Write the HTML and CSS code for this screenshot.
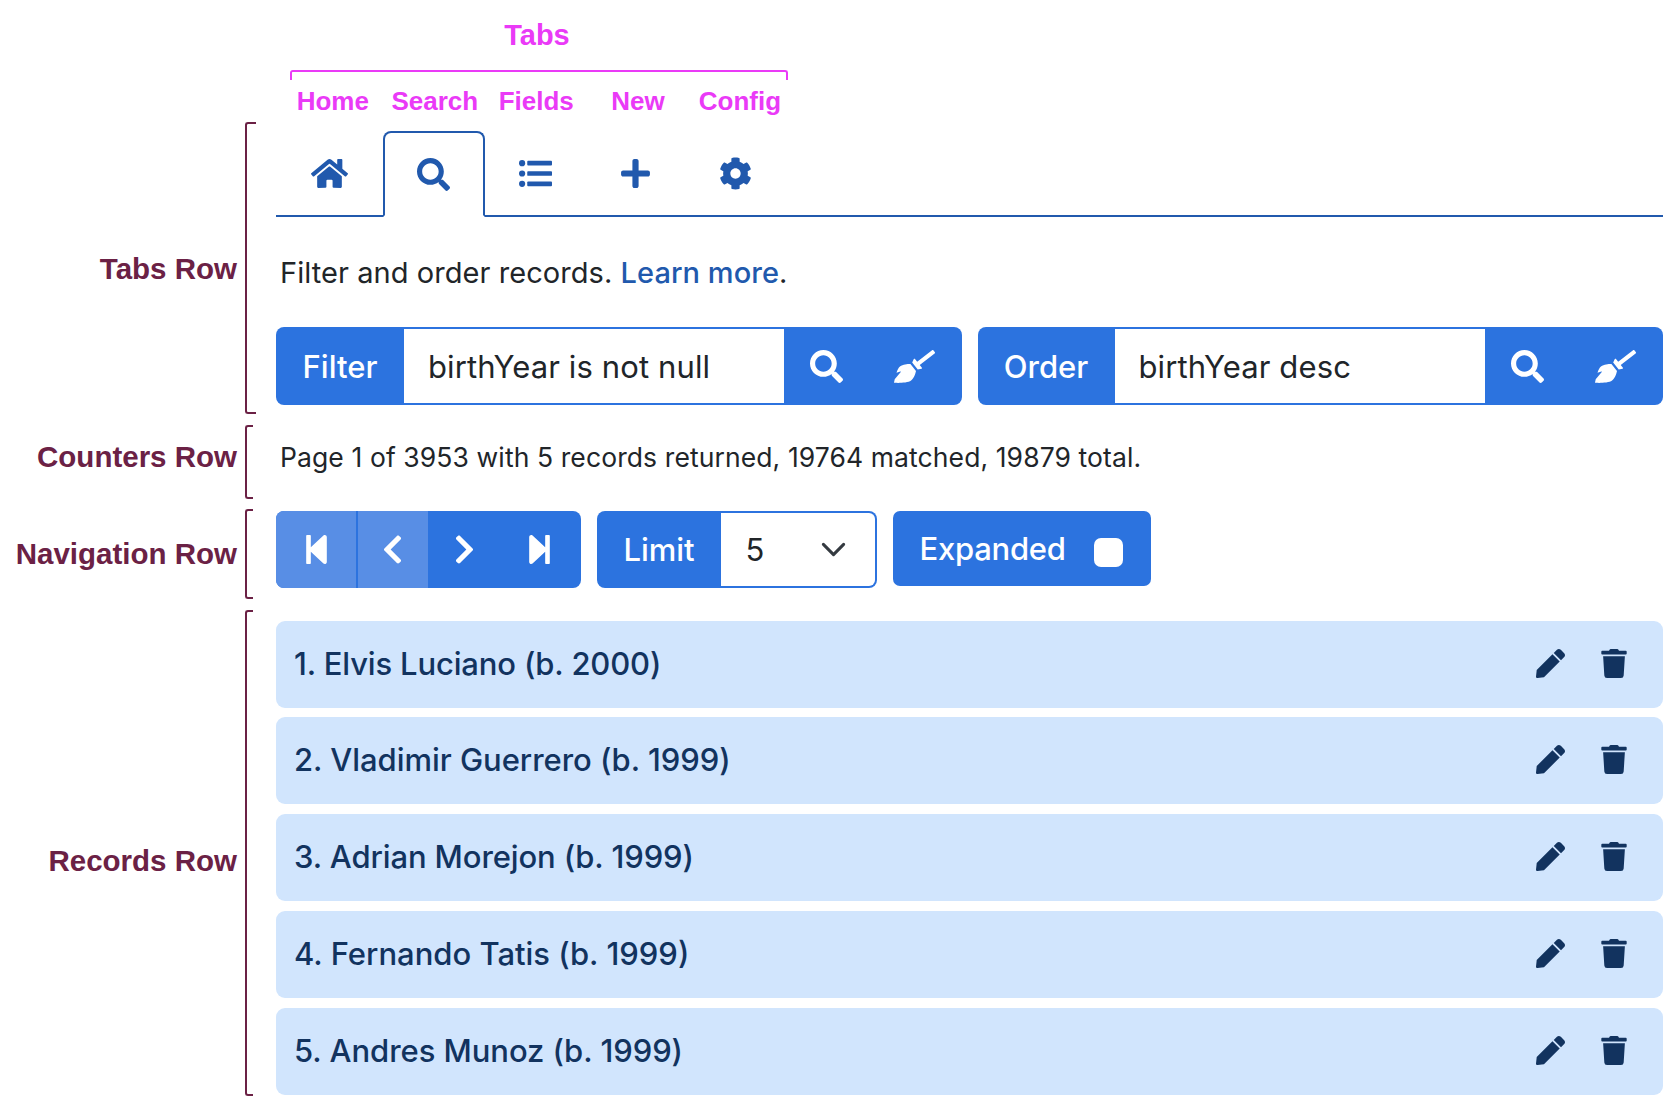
FILE: index.html
```html
<!DOCTYPE html>
<html lang="en">
<head>
<meta charset="utf-8">
<title>Records</title>
<link rel="stylesheet" href="styles.css">
</head>
<body>
<svg class="sprite" xmlns="http://www.w3.org/2000/svg">
  <symbol id="home" viewBox="0 0 576 512"><path d="M280.37 148.26L96 300.11V464a16 16 0 0 0 16 16l112.06-.29a16 16 0 0 0 15.92-16V368a16 16 0 0 1 16-16h64a16 16 0 0 1 16 16v95.64a16 16 0 0 0 16 16.05L464 480a16 16 0 0 0 16-16V300L295.67 148.26a12.19 12.19 0 0 0-15.3 0zM571.6 251.47L488 182.56V44.05a12 12 0 0 0-12-12h-56a12 12 0 0 0-12 12v72.61L318.47 43a48 48 0 0 0-61 0L4.34 251.47a12 12 0 0 0-1.6 16.9l25.5 31A12 12 0 0 0 45.15 301l235.22-193.74a12.19 12.19 0 0 1 15.3 0L530.9 301a12 12 0 0 0 16.9-1.6l25.5-31a12 12 0 0 0-1.7-16.93z"/></symbol>
  <symbol id="search" viewBox="0 0 512 512"><path d="M505 442.7L405.3 343c-4.5-4.5-10.6-7-17-7H372c27.6-35.3 44-79.7 44-128C416 93.1 322.9 0 208 0S0 93.1 0 208s93.1 208 208 208c48.3 0 92.7-16.4 128-44v16.3c0 6.4 2.5 12.5 7 17l99.7 99.7c9.4 9.4 24.6 9.4 33.9 0l28.3-28.3c9.4-9.4 9.4-24.6.1-34zM208 336c-70.7 0-128-57.2-128-128 0-70.7 57.2-128 128-128 70.7 0 128 57.2 128 128 0 70.7-57.2 128-128 128z"/></symbol>
  <symbol id="list" viewBox="0 0 512 512"><circle cx="48" cy="96" r="48"/><circle cx="48" cy="256" r="48"/><circle cx="48" cy="416" r="48"/><rect x="128" y="60" width="384" height="72" rx="14"/><rect x="128" y="220" width="384" height="72" rx="14"/><rect x="128" y="380" width="384" height="72" rx="14"/></symbol>
  <symbol id="plus" viewBox="0 0 448 512"><path d="M416 208H272V64c0-17.67-14.33-32-32-32h-32c-17.67 0-32 14.33-32 32v144H32c-17.67 0-32 14.33-32 32v32c0 17.67 14.33 32 32 32h144v144c0 17.67 14.33 32 32 32h32c17.67 0 32-14.33 32-32V304h144c17.67 0 32-14.33 32-32v-32c0-17.67-14.33-32-32-32z"/></symbol>
  <symbol id="cog" viewBox="0 0 512 512"><path d="M487.4 315.7l-42.6-24.6c4.3-23.2 4.3-47 0-70.2l42.6-24.6c4.9-2.8 7.1-8.6 5.5-14-11.1-35.6-30-67.8-54.7-94.6-3.8-4.1-10-5.1-14.8-2.3L380.8 110c-17.9-15.4-38.5-27.3-60.8-35.1V25.8c0-5.6-3.9-10.5-9.4-11.7-36.7-8.2-74.3-7.8-109.2 0-5.5 1.2-9.4 6.1-9.4 11.7V75c-22.2 7.9-42.8 19.8-60.8 35.1L88.7 85.5c-4.9-2.8-11-1.9-14.8 2.3-24.7 26.7-43.6 58.9-54.7 94.6-1.7 5.4.6 11.2 5.5 14L67.3 221c-4.3 23.2-4.3 47 0 70.2l-42.6 24.6c-4.9 2.8-7.1 8.6-5.5 14 11.1 35.6 30 67.8 54.7 94.6 3.8 4.1 10 5.1 14.8 2.3l42.6-24.6c17.9 15.4 38.5 27.3 60.8 35.1v49.2c0 5.6 3.9 10.5 9.4 11.7 36.7 8.2 74.3 7.8 109.2 0 5.5-1.2 9.4-6.1 9.4-11.7v-49.2c22.2-7.9 42.8-19.8 60.8-35.1l42.6 24.6c4.9 2.8 11 1.9 14.8-2.3 24.7-26.7 43.6-58.9 54.7-94.6 1.5-5.5-.7-11.3-5.6-14.1zM256 336c-44.1 0-80-35.9-80-80s35.9-80 80-80 80 35.9 80 80-35.9 80-80 80z"/></symbol>
  <symbol id="broom" viewBox="0 0 640 512"><path d="M256.47 216.77l86.73 109.18s-16.6 102.36-76.57 150.12C206.66 523.85 0 510.19 0 510.19s3.8-23.14 11-55.43l94.62-112.17c3.97-4.7-.87-11.62-6.65-9.5l-60.4 22.09c14.44-41.66 32.72-80.04 54.6-97.47 59.97-47.76 163.3-40.94 163.3-40.94zM636.53 31.03l-19.86-25c-5.49-6.9-15.52-8.05-22.41-2.56l-232.48 177.8-34.14-42.97c-5.09-6.41-15.14-5.21-18.59 2.21l-25.33 54.55 86.73 109.18 58.8-12.45c8-1.69 11.42-11.2 6.34-17.6l-34.09-42.92 232.48-177.8c6.89-5.48 8.04-15.53 2.55-22.44z"/></symbol>
  <symbol id="first" viewBox="0 0 448 512"><path d="M64 468V44c0-6.6 5.4-12 12-12h48c6.6 0 12 5.4 12 12v176.4l195.5-181C352.1 22.3 384 36.6 384 64v384c0 27.4-31.9 41.7-52.5 24.6L136 292.7V468c0 6.6-5.4 12-12 12H76c-6.6 0-12-5.4-12-12z"/></symbol>
  <symbol id="prev" viewBox="0 0 320 512"><path d="M34.52 239.03L228.87 44.69c9.37-9.37 24.57-9.37 33.94 0l22.67 22.67c9.36 9.36 9.37 24.52.04 33.9L131.49 256l154.02 154.75c9.34 9.38 9.32 24.54-.04 33.9l-22.67 22.67c-9.37 9.37-24.57 9.37-33.94 0L34.52 272.97c-9.37-9.37-9.37-24.57 0-33.94z"/></symbol>
  <symbol id="pen" viewBox="0 0 512 512"><path d="M290.74 93.24l128.02 128.02-277.99 277.99-114.14 12.6C11.35 513.54-1.56 500.62.14 485.34l12.7-114.22 277.9-277.88zm207.2-19.06l-60.11-60.11c-18.75-18.75-49.16-18.75-67.91 0l-56.55 56.55 128.02 128.02 56.55-56.55c18.75-18.76 18.75-49.16 0-67.91z"/></symbol>
  <symbol id="trash" viewBox="0 0 448 512"><path d="M432 32H312l-9.4-18.7A24 24 0 0 0 281.1 0H166.8a23.72 23.72 0 0 0-21.4 13.3L136 32H16A16 16 0 0 0 0 48v32a16 16 0 0 0 16 16h416a16 16 0 0 0 16-16V48a16 16 0 0 0-16-16zM53.2 467a48 48 0 0 0 47.9 45h245.8a48 48 0 0 0 47.9-45L416 128H32z"/></symbol>
</svg>

<header class="legend">
  <div class="legend-title">Tabs</div>
  <div class="legend-bracket"></div>
  <div class="legend-names">
    <span>Home</span><span>Search</span><span>Fields</span><span>New</span><span>Config</span>
  </div>
</header>

<section class="row row-tabs">
  <h2 class="label">Tabs Row</h2>
  <div class="bracket bracket-wide"></div>
  <div class="content">
    <nav class="tabs">
      <a class="tab tab-home"><svg class="icon icon-home"><use href="#home"/></svg></a>
      <a class="tab tab-search active"><svg class="icon"><use href="#search"/></svg></a>
      <a class="tab tab-fields"><svg class="icon"><use href="#list"/></svg></a>
      <a class="tab tab-new"><svg class="icon icon-plus"><use href="#plus"/></svg></a>
      <a class="tab tab-config"><svg class="icon"><use href="#cog"/></svg></a>
    </nav>
    <p class="help">Filter and order records. <a class="link">Learn more</a>.</p>
    <div class="groups">
      <div class="group">
        <span class="addon addon-filter">Filter</span>
        <span class="field">birthYear is not null</span>
        <span class="btn btn-search"><svg class="icon"><use href="#search"/></svg></span>
        <span class="btn btn-clear"><svg class="icon icon-broom"><use href="#broom"/></svg></span>
      </div>
      <div class="group">
        <span class="addon addon-order">Order</span>
        <span class="field">birthYear desc</span>
        <span class="btn btn-search"><svg class="icon"><use href="#search"/></svg></span>
        <span class="btn btn-clear"><svg class="icon icon-broom"><use href="#broom"/></svg></span>
      </div>
    </div>
  </div>
</section>

<section class="row row-counters">
  <h2 class="label">Counters Row</h2>
  <div class="bracket"></div>
  <div class="content">
    <p class="counters">Page 1 of 3953 with 5 records returned, 19764 matched, 19879 total.</p>
  </div>
</section>

<section class="row row-nav">
  <h2 class="label">Navigation Row</h2>
  <div class="bracket"></div>
  <div class="content controls">
    <div class="pager">
      <span class="page page-first off"><svg class="icon icon-step"><use href="#first"/></svg></span>
      <span class="page page-prev off"><svg class="icon icon-chevron"><use href="#prev"/></svg></span>
      <span class="page page-next"><svg class="icon icon-chevron flip"><use href="#prev"/></svg></span>
      <span class="page page-last"><svg class="icon icon-step flip"><use href="#first"/></svg></span>
    </div>
    <div class="limit">
      <span class="addon addon-limit">Limit</span>
      <span class="select">5<svg class="caret" viewBox="0 0 16 16"><path d="m2 5 6 6 6-6"/></svg></span>
    </div>
    <label class="expanded">Expanded<span class="check"></span></label>
  </div>
</section>

<section class="row row-records">
  <h2 class="label">Records Row</h2>
  <div class="bracket"></div>
  <div class="content records">
    <div class="record"><span class="name">1. Elvis Luciano (b. 2000)</span><svg class="pen"><use href="#pen"/></svg><svg class="trash"><use href="#trash"/></svg></div>
    <div class="record"><span class="name">2. Vladimir Guerrero (b. 1999)</span><svg class="pen"><use href="#pen"/></svg><svg class="trash"><use href="#trash"/></svg></div>
    <div class="record"><span class="name">3. Adrian Morejon (b. 1999)</span><svg class="pen"><use href="#pen"/></svg><svg class="trash"><use href="#trash"/></svg></div>
    <div class="record"><span class="name">4. Fernando Tatis (b. 1999)</span><svg class="pen"><use href="#pen"/></svg><svg class="trash"><use href="#trash"/></svg></div>
    <div class="record"><span class="name">5. Andres Munoz (b. 1999)</span><svg class="pen"><use href="#pen"/></svg><svg class="trash"><use href="#trash"/></svg></div>
  </div>
</section>
</body>
</html>
```
FILE: styles.css
```css
:root {
  --blue: #2c73df;
  --link: #2159ad;
  --navy: #12335f;
  --pale: #d1e5fd;
  --maroon: #6b2145;
  --pink: #ea3af7;
}

* { box-sizing: border-box; }

body {
  margin: 0;
  width: 1672px;
  height: 1102px;
  overflow: hidden;
  display: flex;
  flex-direction: column;
  background: #fff;
  color: #212529;
  font-family: Inter, "Liberation Sans", sans-serif;
  white-space: nowrap;
}

.sprite { display: none; }

.icon { width: 33px; height: 33px; fill: currentColor; flex: none; }
.icon-home { width: 37px; }
.icon-plus { width: 29px; }
.icon-broom { width: 41px; }
.icon-step { width: 29px; }
.icon-chevron { width: 21px; }
.flip { transform: scaleX(-1); }

/* Names above the tab strip */
.legend {
  height: 122px;
  padding-left: 290px;
  flex: none;
  color: var(--pink);
  font-family: "Liberation Sans", Arial, sans-serif;
  font-weight: bold;
}
.legend-title { width: 494px; padding-top: 19px; height: 70px; font-size: 29px; line-height: 32px; text-align: center; }
.legend-bracket {
  width: 498px;
  height: 10px;
  border: 2px solid var(--pink);
  border-bottom: 0;
  border-radius: 3px 3px 0 0;
}
.legend-names { display: flex; padding: 6px 0 0 6.7px; font-size: 26px; line-height: 30px; }
.legend-names span:nth-child(2) { margin-left: 22.5px; }
.legend-names span:nth-child(3) { margin-left: 20.5px; }
.legend-names span:nth-child(4) { margin-left: 37.5px; }
.legend-names span:nth-child(5) { margin-left: 34px; }

/* Labelled rows */
.row {
  display: grid;
  grid-template-columns: 237px 11px 1387px;
  column-gap: 8px;
  flex: none;
}
.row-tabs { height: 292px; }
.row-counters { height: 74px; margin-top: 11px; }
.row-nav { height: 90px; margin-top: 10px; }
.row-records { height: 486px; margin-top: 11px; }

.label {
  margin: 0;
  align-self: center;
  text-align: right;
  color: var(--maroon);
  font: bold 29.5px/34px "Liberation Sans", Arial, sans-serif;
}
.row-tabs .label { padding-top: 2px; }
.row-counters .label { padding-bottom: 10px; }
.row-records .label { padding-top: 15px; }

.bracket {
  width: 8px;
  border: 2px solid var(--maroon);
  border-right: 0;
  border-radius: 3px 0 0 3px;
}
.bracket-wide { width: 11px; }
.content { min-width: 0; margin-left: 12px; width: 1387px; }

/* Tabs */
.tabs { display: flex; margin-top: 9px; height: 86px; color: var(--link); }
.tabs::after { content: ""; flex: 1; border-bottom: 2px solid var(--link); }
.tab {
  display: flex;
  align-items: center;
  justify-content: center;
  border-bottom: 2px solid var(--link);
}
.tab-home { width: 107px; }
.tab-search { width: 102px; padding-right: 1px; }
.tab-fields { width: 102px; padding-right: 1px; }
.tab-new { width: 98px; padding-right: 1px; }
.tab-config { width: 102px; padding-right: 2px; }
.tab.active {
  border: 2px solid var(--link);
  border-bottom-color: #fff;
  border-radius: 8px 8px 0 0;
}

.help { margin: 36px 0 0 4px; font-size: 29px; line-height: 40px; letter-spacing: .06px; }
.link { color: var(--link); font-weight: 500; }

.groups { display: flex; gap: 16px; margin-top: 34px; }
.group {
  flex: 1;
  display: flex;
  height: 78px;
  border-radius: 8px;
  background: var(--blue);
  overflow: hidden;
}
.addon {
  display: flex;
  align-items: center;
  justify-content: center;
  color: #fff;
  font-size: 31px;
  font-weight: 500;
}
.addon-filter { width: 128px; }
.addon-order { width: 137px; }
.field {
  flex: 1;
  display: flex;
  align-items: center;
  margin: 2px 0;
  padding-left: 24px;
  background: #fff;
  font-size: 31px;
  letter-spacing: .12px;
}
.btn { display: flex; align-items: center; justify-content: center; color: #fff; }
.btn-search { width: 85px; }
.btn-clear { width: 93px; padding-right: 2px; }

.counters { margin: 11px 0 0 4px; font-size: 26.5px; line-height: 42px; letter-spacing: .1px; }

/* Pager, limit and expanded switch */
.controls { display: flex; align-items: flex-start; gap: 16px; padding-top: 2px; }
.pager { display: flex; width: 305px; height: 77px; border-radius: 8px; background: var(--blue); overflow: hidden; color: #fff; }
.page { display: flex; align-items: center; justify-content: center; }
.page.off { background: #588ee5; }
.page-first { width: 80px; padding-left: 1px; }
.page-prev { width: 70px; margin-left: 2px; padding-right: 2px; }
.page-next { width: 73px; padding-right: 1px; }
.page-last { width: 80px; padding-right: 3px; }

.limit { display: flex; width: 280px; height: 77px; padding: 2px 2px 2px 0; border-radius: 8px; background: var(--blue); }
.addon-limit { width: 124px; }
.select {
  flex: 1;
  display: flex;
  align-items: center;
  justify-content: space-between;
  padding: 0 28px 0 24.5px;
  border-radius: 0 6px 6px 0;
  background: #fff;
  font-size: 31px;
}
.caret { width: 27px; height: 27px; fill: none; stroke: #343a40; stroke-width: 1.8; stroke-linecap: round; stroke-linejoin: round; }

.expanded {
  display: flex;
  align-items: center;
  justify-content: space-between;
  width: 258px;
  height: 75px;
  padding: 0 28px 0 26.5px;
  border-radius: 7px;
  background: var(--blue);
  color: #fff;
  font-size: 31px;
  font-weight: 500;
  letter-spacing: -.25px;
}
.check { width: 29px; height: 29px; margin-top: 8px; border-radius: 7px; background: #fff; }

/* Records */
.records { display: flex; flex-direction: column; gap: 9.75px; padding-top: 10.6px; }
.record {
  display: flex;
  align-items: center;
  flex: none;
  height: 87px;
  padding: 0 36px 2px 18px;
  border-radius: 9px;
  background: var(--pale);
  color: var(--navy);
  font-size: 31px;
  font-weight: 500;
}
.record:nth-child(1) { letter-spacing: -.16px; }
.record:nth-child(2) { letter-spacing: -.04px; }
.record:nth-child(3) { letter-spacing: -.11px; }
.record:nth-child(5) { letter-spacing: -.06px; }
.name { flex: 1; }
.pen { width: 29px; height: 29px; fill: currentColor; }
.trash { width: 26px; height: 29px; margin-left: 36px; fill: currentColor; }
```
